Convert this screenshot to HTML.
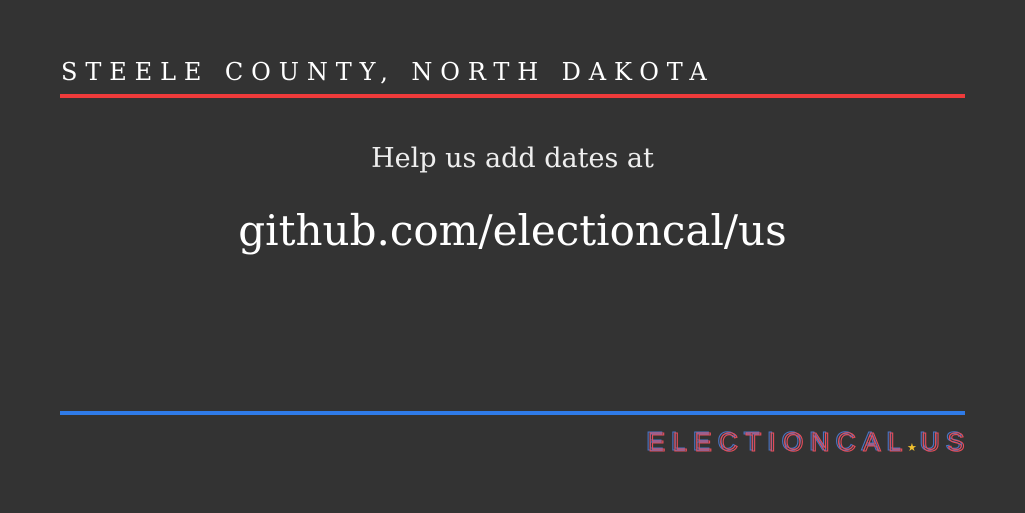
<!DOCTYPE html>
<html><head><meta charset="utf-8"><style>
body{margin:0;width:1025px;height:513px;background:#333;overflow:hidden;position:relative;font-family:"DejaVu Serif","Liberation Serif",serif;color:#fff}
.t{position:absolute;left:61px;top:58px;font-size:24px;letter-spacing:7.9px;white-space:nowrap}
.r{position:absolute;left:60px;top:94px;width:905px;height:4px;background:#ef3b3b}
.b{position:absolute;left:60px;top:411px;width:905px;height:4px;background:#2f7be8}
.h{position:absolute;left:0;width:1025px;text-align:center;white-space:nowrap}
.logo{position:absolute;left:648px;top:427px;font-family:"Liberation Sans",sans-serif;font-size:26px;letter-spacing:7.4px;white-space:nowrap;color:transparent;-webkit-text-stroke:1.1px #e84d5a}
.logo2{-webkit-text-stroke:1.1px #4b74c4;left:646px;top:426px}
</style></head><body>
<div class="t">STEELE COUNTY, NORTH DAKOTA</div>
<div class="r"></div>
<div class="h" style="top:143px;font-size:27px;font-weight:300;color:#eee">Help us add dates at</div>
<div class="h" style="top:206px;font-size:42px">github.com/electioncal/us</div>
<div class="b"></div>
<div class="logo logo2">ELECTIONCAL<span style="letter-spacing:4px"> </span>US</div>
<div class="logo">ELECTIONCAL<span style="letter-spacing:4px"> </span>US</div>
<div style="position:absolute;left:907px;top:441px;color:#f2c12e;font-size:11px;font-family:'DejaVu Sans',sans-serif">★</div>
</body></html>
